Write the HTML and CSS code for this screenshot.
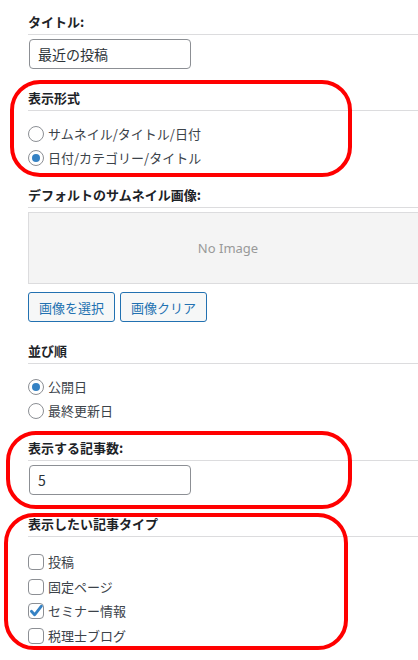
FILE: index.html
```html
<!DOCTYPE html>
<html lang="ja">
  <head>
    <meta charset="UTF-8" />
    <meta name="viewport" content="width=device-width, initial-scale=1.0" />
    <title>最近の投稿 ウィジェット</title>
    <link rel="stylesheet" href="styles.css">
  </head>
  <body>
    <div class="widget-form">
      <div class="field">
        <h4 class="field-title">タイトル:</h4>
        <input class="text-input" type="text" value="最近の投稿" />
      </div>

      <div class="field">
        <h4 class="field-title">表示形式</h4>
        <div class="options">
          <label class="option"><span class="radio"></span>サムネイル/タイトル/日付</label>
          <label class="option"><span class="radio is-checked"></span>日付/カテゴリー/タイトル</label>
        </div>
      </div>

      <div class="field">
        <h4 class="field-title">デフォルトのサムネイル画像:</h4>
        <div class="thumb-preview">No Image</div>
        <div class="buttons">
          <button class="button">画像を選択</button>
          <button class="button">画像クリア</button>
        </div>
      </div>

      <div class="field">
        <h4 class="field-title">並び順</h4>
        <div class="options">
          <label class="option"><span class="radio is-checked"></span>公開日</label>
          <label class="option"><span class="radio"></span>最終更新日</label>
        </div>
      </div>

      <div class="field">
        <h4 class="field-title">表示する記事数:</h4>
        <input class="text-input" type="text" value="5" />
      </div>

      <div class="field">
        <h4 class="field-title">表示したい記事タイプ</h4>
        <div class="options options-check">
          <label class="option"><span class="checkbox"></span>投稿</label>
          <label class="option"><span class="checkbox"></span>固定ページ</label>
          <label class="option">
            <span class="checkbox">
              <svg viewBox="0 0 16 16" width="16" height="16"><path d="M3.4 8.2 L6.6 11.8 L13.4 3.2" fill="none" stroke="#3582c4" stroke-width="2.8" stroke-linecap="round" stroke-linejoin="round"/></svg>
            </span>セミナー情報
          </label>
          <label class="option"><span class="checkbox"></span>税理士ブログ</label>
        </div>
      </div>
    </div>

    <!-- red annotation marks -->
    <div class="mark mark-format"></div>
    <div class="mark mark-count"></div>
    <div class="mark mark-types"></div>
  </body>
</html>
```

FILE: styles.css
```css
body {
  margin: 0;
  position: relative;
  overflow: hidden;
  height: 660px;
  background: #fff;
  font-family: "Noto Sans CJK JP", "Liberation Sans", sans-serif;
  font-size: 13px;
  color: #2c3338;
}

.widget-form {
  width: 400px;
  padding: 13px 0 0 28px;
}

.field {
  margin-top: 20px;
}

.field:first-child {
  margin-top: 0;
}

.field-title {
  margin: 0;
  padding-bottom: 3px;
  line-height: 18px;
  font-size: 13px;
  font-weight: 700;
  color: #1d2327;
  border-bottom: 1px solid #dcdcde;
}

.text-input {
  display: block;
  box-sizing: border-box;
  width: 162px;
  height: 30px;
  margin: 4px 0 0 1px;
  padding: 0 8px;
  border: 1px solid #8c8f94;
  border-radius: 4px;
  font-family: inherit;
  font-size: 14px;
  color: #2c3338;
  background: #fff;
}

.options {
  margin: 11px 0 -4px;
}

.options-check {
  margin-top: 13px;
}

.option {
  display: flex;
  align-items: center;
  height: 24px;
  line-height: 18px;
  color: #3c434a;
}

.options-check .option {
  height: 24.5px;
}

.radio,
.checkbox {
  box-sizing: border-box;
  width: 16px;
  height: 16px;
  margin-right: 4px;
  border: 1px solid #8c8f94;
  background: #fff;
  flex-shrink: 0;
}

.radio {
  border-radius: 50%;
  display: flex;
  align-items: center;
  justify-content: center;
}

.radio.is-checked::before {
  content: "";
  width: 8px;
  height: 8px;
  border-radius: 50%;
  background: #3582c4;
}

.checkbox {
  border-radius: 4px;
  position: relative;
}

.checkbox svg {
  position: absolute;
  left: -1px;
  top: -1px;
}

.thumb-preview {
  box-sizing: border-box;
  height: 72px;
  margin-top: 4px;
  border: 1px solid #dcdcde;
  background: #f4f4f4;
  color: #999;
  font-family: "Noto Sans", "Liberation Sans", sans-serif;
  font-size: 13px;
  display: flex;
  align-items: center;
  justify-content: center;
}

.buttons {
  display: flex;
  gap: 5px;
  margin-top: 8px;
}

.button {
  box-sizing: border-box;
  height: 30px;
  padding: 0 10px;
  border: 1px solid #2271b1;
  border-radius: 3px;
  background: #f6f7f7;
  color: #2271b1;
  font-family: inherit;
  font-size: 13px;
  cursor: pointer;
}

.mark {
  position: absolute;
  box-sizing: border-box;
  border: 4px solid #ff0000;
  border-radius: 30px;
  pointer-events: none;
}

.mark-format {
  left: 10px;
  top: 80px;
  width: 342px;
  height: 97px;
}

.mark-count {
  left: 6px;
  top: 431px;
  width: 346px;
  height: 78px;
}

.mark-types {
  left: 4px;
  top: 513px;
  width: 344px;
  height: 137px;
}
```
